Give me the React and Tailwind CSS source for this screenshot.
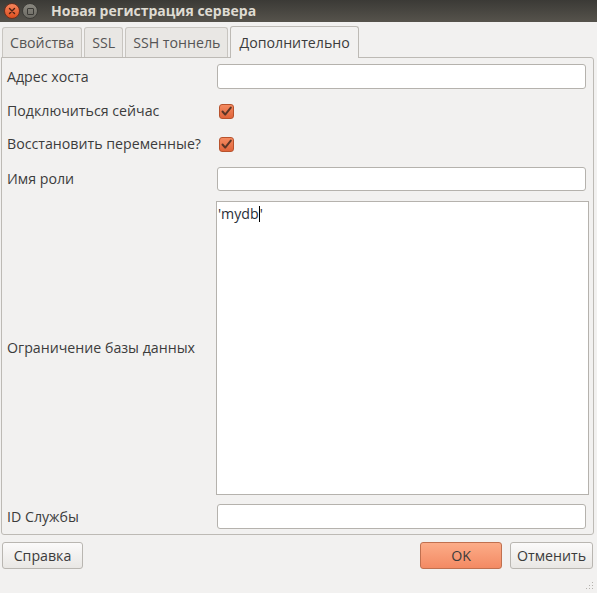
import React from "react";

const font = { fontFamily: '"Open Sans", "Liberation Sans", Arial, sans-serif' };

function Check() {
  return (
    <div className="w-[15px] h-[15px] rounded-[3px] border border-[#b8532d] bg-gradient-to-b from-[#f48a60] to-[#e0643a] flex items-center justify-center">
      <svg width="13" height="13" viewBox="0 0 13 13">
        <path d="M2.5 6.5 L5.2 9.6 L10.8 2.6" fill="none" stroke="#5b3526" strokeWidth="2" strokeLinecap="round" strokeLinejoin="round" />
      </svg>
    </div>
  );
}

function Field({ h = "h-[25px]" }) {
  return <div className={`w-full ${h} bg-white border border-[#b5b2ad] rounded-[3px]`} />;
}

function Row({ label, children, cls }) {
  return (
    <div className={`grid grid-cols-[210px_1fr] items-center ${cls}`}>
      <span className="whitespace-nowrap">{label}</span>
      <div className="flex items-center">{children}</div>
    </div>
  );
}

export default function App() {
  const tabs = ["Свойства", "SSL", "SSH тоннель"];
  return (
    <div className="w-[597px] h-[593px] bg-[#f2f1f0] flex flex-col text-[14.2px] text-[#3c3c3c] overflow-hidden" style={font}>
      {/* title bar */}
      <div className="h-[22px] bg-gradient-to-b from-[#3b3a36] to-[#56534c] flex items-center pl-[4px] shrink-0">
        <div className="w-[16px] h-[16px] rounded-full bg-gradient-to-b from-[#f5845a] to-[#df4e1c] border border-[#6a3020] flex items-center justify-center">
          <svg width="8" height="8" viewBox="0 0 8 8">
            <path d="M1.5 1.5 L6.5 6.5 M6.5 1.5 L1.5 6.5" stroke="#4a2014" strokeWidth="1.4" strokeLinecap="round" />
          </svg>
        </div>
        <div className="ml-[2px] w-[16px] h-[16px] rounded-full bg-gradient-to-b from-[#8a8880] to-[#6c6a63] border border-[#3c3b37] flex items-center justify-center">
          <div className="w-[7px] h-[7px] border border-[#3a3935] rounded-[1px]" />
        </div>
        <span className="ml-[13px] font-bold text-[#dfdbd2] text-[14px] leading-none">Новая регистрация сервера</span>
      </div>

      {/* tabs */}
      <div className="flex items-end px-[2px] pt-[3px] h-[35px] shrink-0">
        {tabs.map((t) => (
          <div key={t} className="h-[30px] px-[7px] mr-[2px] flex items-center bg-[#e9e7e4] border border-[#c8c5c0] border-b-0 rounded-t-[3px] text-[#555]">
            {t}
          </div>
        ))}
        <div className="h-[32px] px-[8px] flex items-center bg-[#f2f1f0] border border-[#bdbab5] border-b-0 rounded-t-[3px] relative top-[1px] text-[#3c3c3c]">
          Дополнительно
        </div>
      </div>

      {/* panel */}
      <div className="ml-[1px] mr-[3px] h-[478px] border border-[#bdbab5] rounded-b-[3px] rounded-tr-[3px] flex flex-col pl-[5px] pr-[7px] pt-[6px] shrink-0">
        <Row label="Адрес хоста" cls="h-[25px]">
          <Field />
        </Row>
        <Row label="Подключиться сейчас" cls="h-[26px] mt-[9px]">
          <div className="ml-[2px]"><Check /></div>
        </Row>
        <Row label="Восстановить переменные?" cls="h-[26px] mt-[7px]">
          <div className="ml-[2px]"><Check /></div>
        </Row>
        <Row label="Имя роли" cls="h-[24px] mt-[10px]">
          <Field h="h-[24px]" />
        </Row>
        <Row label="Ограничение базы данных" cls="h-[294px] mt-[10px]">
          <div className="w-[373px] -ml-[1px] h-[294px] bg-white border border-[#b5b2ad] px-[1px] pt-[1px]">
            <span className="text-[#2a2f3a]">'mydb</span>
            <span className="inline-block w-[1px] h-[16px] bg-black align-middle -mt-[2px]" />
            <span className="text-[#2a2f3a]">'</span>
          </div>
        </Row>
        <Row label="ID Службы" cls="h-[25px] mt-[9px]">
          <Field />
        </Row>
      </div>

      {/* buttons */}
      <div className="flex items-center pl-[2px] pr-[4px] mt-[7px] h-[27px] shrink-0">
        <button className="w-[81px] h-[27px] rounded-[3px] border border-[#b9b6b1] bg-gradient-to-b from-[#fbfafa] to-[#e9e7e4] text-[#3c3c3c]">Справка</button>
        <div className="flex-1" />
        <button className="w-[82px] h-[27px] rounded-[3px] border border-[#c0704f] bg-gradient-to-b from-[#fcac88] to-[#f38a63] text-[#3c3c3c]">OK</button>
        <button className="ml-[8px] w-[83px] h-[27px] rounded-[3px] border border-[#b9b6b1] bg-gradient-to-b from-[#fbfafa] to-[#e9e7e4] text-[#3c3c3c]">Отменить</button>
      </div>

      <div className="flex-1 flex justify-end items-end pr-[3px] pb-[3px]">
        <svg width="10" height="10" viewBox="0 0 10 10">
          {[[8, 2], [8, 5], [5, 5], [8, 8], [5, 8], [2, 8]].map(([x, y], i) => (
            <rect key={i} x={x} y={y} width="1" height="1" fill="#b5b2ad" />
          ))}
        </svg>
      </div>
    </div>
  );
}
